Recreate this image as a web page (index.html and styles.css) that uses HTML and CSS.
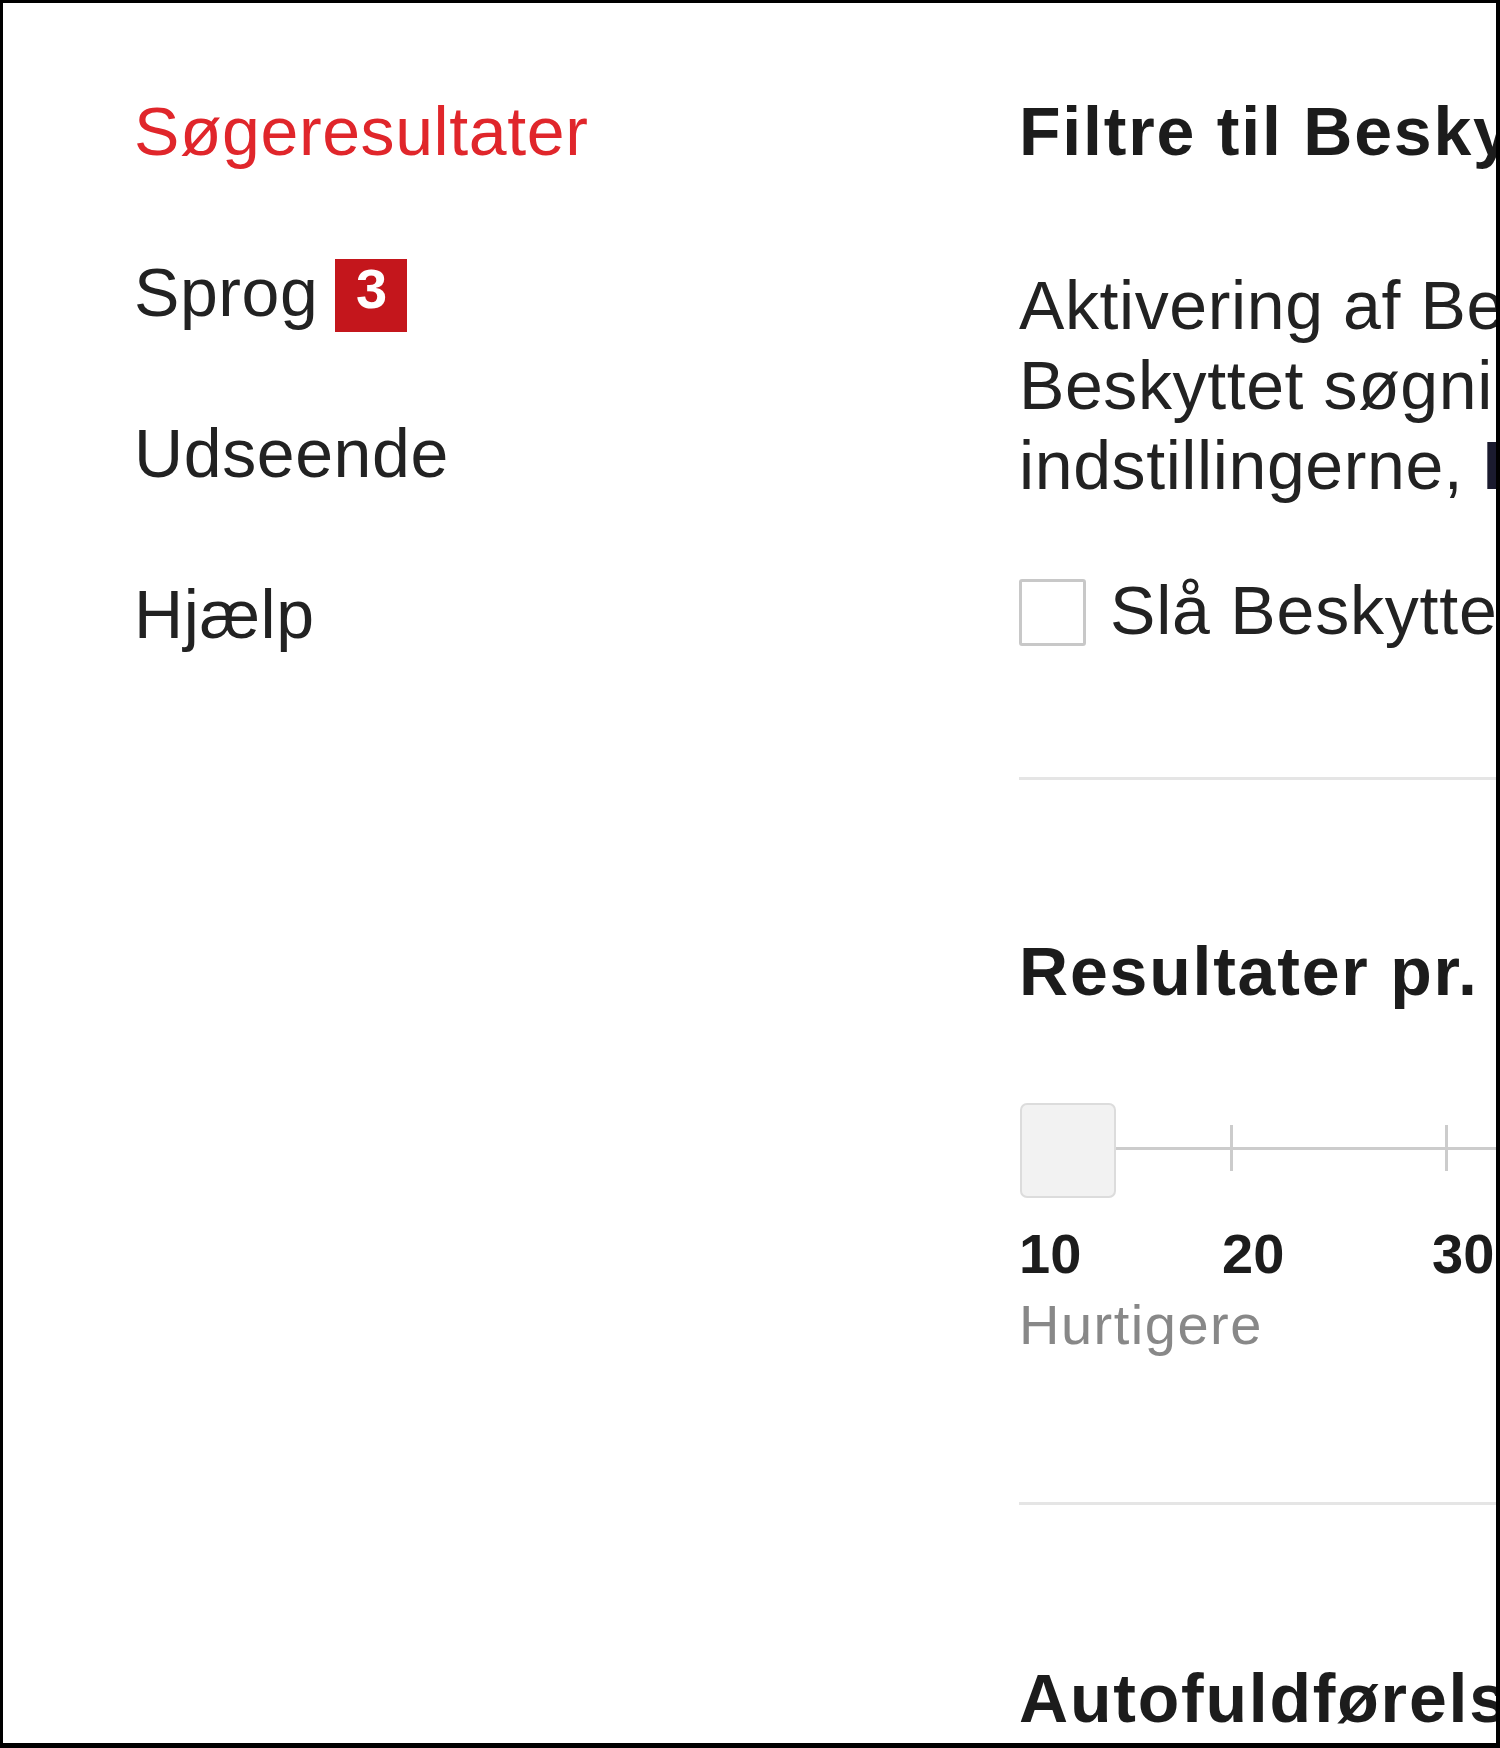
FILE: index.html
```html
<!DOCTYPE html>
<html lang="da">
<head>
<meta charset="utf-8">
<title>Søgeindstillinger</title>
<link rel="stylesheet" href="styles.css">
</head>
<body>
<div class="frame">
  <div class="layout">
    <nav class="nav">
      <a class="nav-item active" href="#">Søgeresultater</a>
      <a class="nav-item" href="#"><span>Sprog</span><span class="badge">3</span></a>
      <a class="nav-item" href="#">Udseende</a>
      <a class="nav-item" href="#">Hjælp</a>
    </nav>
    <main class="main">
      <section class="section">
        <h2 class="heading">Filtre til Beskyttet søgning</h2>
        <p class="desc">Aktivering af Beskyttet søgning hjælper med at frasortere eksplicit indhold.<br>Beskyttet søgning er ikke 100 % nøjagtig. Hvis du vil forhindre andre i at ændre<br>indstillingerne, <b class="strong-link">Lås Beskyttet søgning</b>.</p>
        <label class="check-row"><span class="checkbox"></span><span>Slå Beskyttet søgning til</span></label>
      </section>
      <hr class="divider divider-first">
      <section class="section">
        <h2 class="heading heading-results">Resultater pr. side</h2>
        <div class="slider">
          <div class="handle"></div>
          <div class="rail">
            <span class="tick"></span>
            <span class="tick"></span>
            <span class="tick"></span>
          </div>
        </div>
        <div class="labels">
          <span class="label label-first">10</span>
          <span class="label">20</span>
          <span class="label">30</span>
          <span class="label">40</span>
        </div>
        <div class="hint">Hurtigere</div>
      </section>
      <hr class="divider divider-second">
      <section class="section">
        <h2 class="heading heading-auto">Autofuldførelsesforslag</h2>
      </section>
    </main>
  </div>
</div>
</body>
</html>
```

FILE: styles.css
```css
html, body {
  margin: 0;
  padding: 0;
  background: #fff;
}

.frame {
  width: 1500px;
  height: 1748px;
  box-sizing: border-box;
  border-style: solid;
  border-color: #000;
  border-width: 3px 4px 5px 3px;
  overflow: hidden;
  background: #fff;
  font-family: "Liberation Sans", Arial, sans-serif;
  color: #222;
}

.layout {
  display: flex;
  padding-top: 87.5px;
}

/* left navigation */
.nav {
  flex: 0 0 1016px;
  box-sizing: border-box;
  padding-left: 131px;
  display: flex;
  flex-direction: column;
  gap: 81px;
}

.nav-item {
  display: flex;
  align-items: flex-end;
  gap: 17px;
  height: 80px;
  font-size: 68px;
  line-height: 80px;
  letter-spacing: 0.6px;
  color: #222;
  text-decoration: none;
  white-space: nowrap;
}

.nav-item.active {
  color: #e0262b;
}

.badge {
  display: flex;
  align-items: center;
  justify-content: center;
  box-sizing: border-box;
  width: 72px;
  height: 73px;
  padding-bottom: 12px;
  background: #c4161c;
  color: #fff;
  font-weight: bold;
  font-size: 56px;
  line-height: 60px;
  letter-spacing: 0;
}

/* main column */
.main {
  flex: 0 0 1400px;
}

.heading {
  margin: 0;
  font-size: 68px;
  line-height: 80px;
  font-weight: bold;
  letter-spacing: 1.8px;
  color: #1c1c1c;
  white-space: nowrap;
}

.heading-results {
  margin-top: 150.5px;
}

.heading-auto {
  margin-top: 153.5px;
}

.desc {
  margin: 94px 0 0;
  font-size: 68px;
  line-height: 80px;
  letter-spacing: 0.6px;
  white-space: nowrap;
  color: #222;
}

.strong-link {
  font-weight: bold;
  color: #1a1a2e;
}

.check-row {
  display: flex;
  align-items: center;
  gap: 24px;
  margin-top: 65px;
  font-size: 68px;
  line-height: 80px;
  letter-spacing: 0.8px;
  white-space: nowrap;
}

.checkbox {
  flex: 0 0 auto;
  width: 67px;
  height: 67px;
  margin-top: 6px;
  box-sizing: border-box;
  border: 3px solid #c8c8c8;
  border-radius: 3px;
  background: #fff;
}

.divider {
  display: block;
  margin: 0;
  border: 0;
  height: 3px;
  background: #e5e5e5;
}

.divider-first {
  margin-top: 127.5px;
}

.divider-second {
  margin-top: 145.4px;
}

/* slider */
.slider {
  display: flex;
  align-items: flex-start;
  margin-top: 92.5px;
  padding-left: 1px;
}

.handle {
  flex: 0 0 auto;
  width: 96px;
  height: 95px;
  box-sizing: border-box;
  border: 2px solid #dcdcdc;
  border-radius: 7px;
  background: #f2f2f2;
}

.rail {
  flex: 1;
  display: flex;
  gap: 212px;
  height: 46px;
  margin-top: 22px;
  padding-left: 114px;
  background: linear-gradient(#cccccc, #cccccc) center / 100% 3px no-repeat;
}

.tick {
  flex: 0 0 auto;
  width: 3px;
  height: 46px;
  background: #cccccc;
}

.labels {
  display: flex;
  margin: 25.6px 0 0 -7px;
}

.label {
  flex: 0 0 210px;
  font-weight: bold;
  font-size: 56px;
  line-height: 60px;
  color: #1c1c1c;
}

.label-first {
  padding-left: 7px;
  box-sizing: border-box;
}

.hint {
  margin-top: 9px;
  font-size: 56px;
  line-height: 64px;
  letter-spacing: 1.5px;
  color: #888;
  white-space: nowrap;
}
```
